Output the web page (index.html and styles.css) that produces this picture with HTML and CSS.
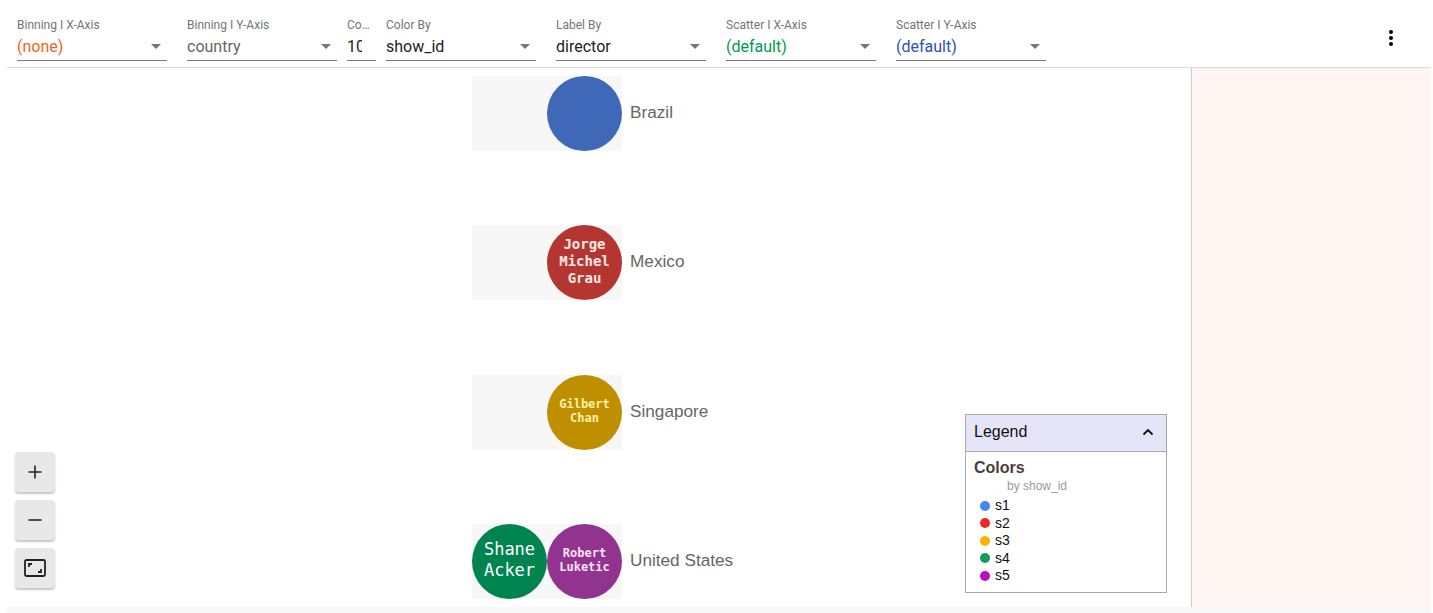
FILE: index.html
```html
<!DOCTYPE html>
<html>
<head>
<meta charset="utf-8">
<link rel="stylesheet" href="styles.css">
</head>
<body>
<div class="app">
  <div class="toolbar">
    <div class="field">
      <div class="label">Binning I X-Axis</div>
      <div class="select"><span class="val orange">(none)</span><span class="arrow"></span></div>
    </div>
    <div class="field">
      <div class="label">Binning I Y-Axis</div>
      <div class="select"><span class="val grey">country</span><span class="arrow"></span></div>
    </div>
    <div class="field narrow">
      <div class="label">Co…</div>
      <div class="select"><span class="val clip">10</span></div>
    </div>
    <div class="field">
      <div class="label">Color By</div>
      <div class="select"><span class="val">show_id</span><span class="arrow"></span></div>
    </div>
    <div class="field">
      <div class="label">Label By</div>
      <div class="select"><span class="val">director</span><span class="arrow"></span></div>
    </div>
    <div class="field">
      <div class="label">Scatter I X-Axis</div>
      <div class="select"><span class="val green">(default)</span><span class="arrow"></span></div>
    </div>
    <div class="field">
      <div class="label">Scatter I Y-Axis</div>
      <div class="select"><span class="val blue">(default)</span><span class="arrow"></span></div>
    </div>
    <div class="spacer"></div>
    <div class="kebab"><span></span><span></span><span></span></div>
  </div>
  <div class="content">
    <div class="canvas">
      <div class="row" style="top:8px">
        <div class="bin"></div>
        <div class="node c-blue" style="left:540px"></div>
        <div class="rowlabel">Brazil</div>
      </div>
      <div class="row" style="top:157px">
        <div class="bin"></div>
        <div class="node c-red t14" style="left:540px">Jorge<br>Michel<br>Grau</div>
        <div class="rowlabel">Mexico</div>
      </div>
      <div class="row" style="top:307px">
        <div class="bin"></div>
        <div class="node c-gold t12" style="left:540px">Gilbert<br>Chan</div>
        <div class="rowlabel">Singapore</div>
      </div>
      <div class="row" style="top:456px">
        <div class="bin"></div>
        <div class="node c-green t17" style="left:465px">Shane<br>Acker</div>
        <div class="node c-purple t12p" style="left:540px">Robert<br>Luketic</div>
        <div class="rowlabel">United States</div>
      </div>

      <div class="zoom">
        <button class="zbtn" aria-label="zoom in">
          <svg width="16" height="16" viewBox="0 0 16 16"><path d="M8 1.5v13M1.5 8h13" stroke="#222" stroke-width="1.6" fill="none"/></svg>
        </button>
        <button class="zbtn" aria-label="zoom out">
          <svg width="16" height="16" viewBox="0 0 16 16"><path d="M1.5 8h13" stroke="#222" stroke-width="1.6" fill="none"/></svg>
        </button>
        <button class="zbtn" aria-label="fit">
          <svg width="22" height="18" viewBox="0 0 22 18"><rect x="1" y="1" width="20" height="16" rx="1.5" stroke="#222" stroke-width="1.8" fill="none"/><path d="M5 8V5h3M17 10v3h-3" stroke="#222" stroke-width="1.8" fill="none"/></svg>
        </button>
      </div>

      <div class="legend">
        <div class="legend-head"><span>Legend</span>
          <svg width="12" height="8" viewBox="0 0 12 8"><path d="M1.5 6.5L6 2l4.5 4.5" stroke="#111" stroke-width="1.8" fill="none"/></svg>
        </div>
        <div class="legend-body">
          <div class="legend-title">Colors</div>
          <div class="legend-sub">by show_id</div>
          <div class="item"><span class="dot" style="background:#4285f4"></span>s1</div>
          <div class="item"><span class="dot" style="background:#ea2a22"></span>s2</div>
          <div class="item"><span class="dot" style="background:#fbb106"></span>s3</div>
          <div class="item"><span class="dot" style="background:#0f9d58"></span>s4</div>
          <div class="item"><span class="dot" style="background:#b80fbf"></span>s5</div>
        </div>
      </div>
    </div>
    <div class="side"></div>
  </div>
  <div class="footer"></div>
</div>
</body>
</html>
```

FILE: styles.css
```css
* { box-sizing: border-box; }
html, body { margin: 0; padding: 0; background: #fff; }
body { font-family: Roboto, "Liberation Sans", Arial, sans-serif; overflow: hidden; }
.app { margin: 0 2px 0 7px; height: 613px; display: flex; flex-direction: column; }

.toolbar {
  display: flex; align-items: flex-start; gap: 20px;
  padding: 18px 0 0 10px; height: 68px;
  border-bottom: 1px solid #dcdcdc;
}
.field { width: 150px; display: flex; flex-direction: column; }
.field.narrow { width: 29px; margin: 0 -10px; }
.label { font-size: 12px; line-height: 14px; color: #757575; white-space: nowrap; overflow: hidden; }
.select {
  height: 29px; display: flex; align-items: center; justify-content: space-between;
  border-bottom: 1px solid #7a7a7a; padding-right: 6px;
}
.val { font-size: 16px; color: #222; white-space: nowrap; }
.val.clip { overflow: hidden; width: 15px; }
.val.orange { color: #ef6423; }
.val.grey { color: #666; }
.val.green { color: #009a4e; }
.val.blue { color: #2f4fb3; }
.arrow { width: 0; height: 0; border-left: 5px solid transparent; border-right: 5px solid transparent; border-top: 5px solid #777; }
.spacer { flex: 1; }
.kebab { display: flex; flex-direction: column; gap: 2px; margin: 12px 38px 0 0; }
.kebab span { width: 4px; height: 4px; border-radius: 50%; background: #000; }

.content { flex: 1; display: flex; min-height: 0; }
.canvas { flex: 1; position: relative; overflow: hidden; }
.side { width: 240px; background: #fff5f2; border-left: 1px solid #cfcaca; }
.footer { height: 6px; background: #f8f8f8; }

.row { position: absolute; left: 0; height: 75px; width: 100%; }
.bin { position: absolute; left: 465px; top: 0; width: 150px; height: 75px; background: #f7f7f7; }
.node {
  position: absolute; top: 0; width: 75px; height: 75px; border-radius: 50%;
  display: flex; align-items: center; justify-content: center; text-align: center;
  font-family: "DejaVu Sans Mono", "Liberation Mono", monospace; font-weight: bold; color: #fff;
  padding-bottom: 3px;
}
.c-blue { background: #3f69b8; }
.c-red { background: #b53631; }
.c-gold { background: #bf8f00; }
.c-green { background: #00844f; }
.c-purple { background: #92338f; }
.t14 { font-size: 14px; line-height: 17px; color: #fde8e6; }
.t12 { font-size: 12px; line-height: 14px; color: #fff2a8; }
.t17 { font-size: 17px; line-height: 21px; font-weight: normal; }
.t12p { font-size: 12px; line-height: 14px; color: #fbe4f8; }
.rowlabel {
  position: absolute; left: 623px; top: 0; height: 75px; display: flex; align-items: center;
  font-family: "Liberation Sans", Arial, sans-serif; font-size: 17.2px; color: #666; padding-bottom: 3px;
}

.zoom { position: absolute; left: 8px; bottom: 19px; display: flex; flex-direction: column; gap: 8px; }
.zbtn {
  width: 40px; height: 40px; border: none; border-radius: 4px; background: #e8e8e8;
  box-shadow: 0 2px 2px rgba(0,0,0,0.22); display: flex; align-items: center; justify-content: center; padding: 0;
}

.legend {
  position: absolute; left: 958px; top: 346px; width: 202px; height: 179px;
  border: 1px solid #aaa; background: #fff;
  font-family: "Liberation Sans", Arial, sans-serif;
}
.legend-head {
  height: 37px; background: #e6e4f8; border-bottom: 1px solid #aaa;
  display: flex; align-items: center; justify-content: space-between; padding: 0 12px 2px 8px;
  font-size: 16px; color: #111;
}
.legend-body { padding: 6px 8px; }
.legend-title { font-size: 16px; font-weight: bold; color: #4b3e3e; line-height: 19px; }
.legend-sub { font-size: 12px; color: #999; padding-left: 33px; line-height: 18px; margin-bottom: 2px; }
.item { display: flex; align-items: center; font-size: 14px; color: #111; line-height: 17.5px; padding-left: 6px; }
.dot { width: 10px; height: 10px; border-radius: 50%; margin-right: 5px; }
```
